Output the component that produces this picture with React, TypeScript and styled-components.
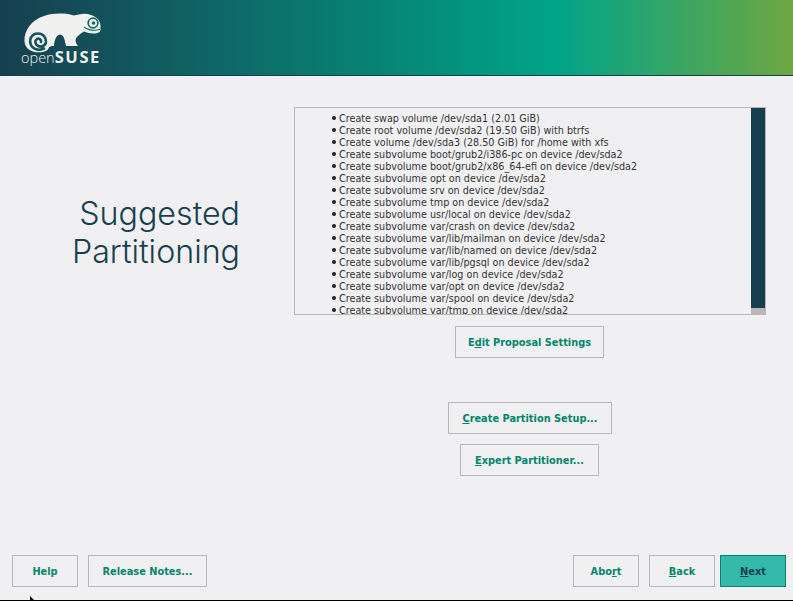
import React from 'react';
import styled, { createGlobalStyle } from 'styled-components';

const GlobalStyle = createGlobalStyle`
  html, body {
    margin: 0;
    padding: 0;
    background: #f0f0f2;
  }
  body {
    font-family: "DejaVu Sans", sans-serif;
    overflow: hidden;
  }
`;

const Page = styled.div`
  position: relative;
  display: flex;
  flex-direction: column;
  width: 793px;
  height: 601px;
  box-sizing: border-box;
  border-bottom: 1px solid #000;
`;

const Header = styled.header`
  display: flex;
  align-items: flex-start;
  flex: none;
  height: 63px;
  padding: 12px 0 0 21px;
  border-bottom: 1px solid #173f4f;
  background: linear-gradient(90deg, #173f4f 0%, #00a489 70%, #6da741 100%);
`;

const LogoBox = styled.div`
  display: flex;
  flex-direction: column;
  width: 84px;
`;

const Wordmark = styled.div`
  display: flex;
  align-items: baseline;
  margin-top: -3px;
  color: #f0f0ee;
  font-family: "Open Sans", sans-serif;
  line-height: 14px;
`;

const WordOpen = styled.span`
  font-size: 14.5px;
  font-weight: 300;
`;

const WordSuse = styled.span`
  font-size: 16.5px;
  font-weight: 700;
  letter-spacing: 1.6px;
`;

const Main = styled.main`
  display: flex;
  flex: 1;
  min-height: 0;
`;

const TitleColumn = styled.div`
  flex: none;
  width: 240px;
  padding-top: 119px;
  box-sizing: border-box;
`;

const Title = styled.h1`
  margin: 0;
  color: #173f4f;
  font-family: "Inter", sans-serif;
  font-size: 32.2px;
  font-weight: 300;
  line-height: 38px;
  text-align: right;
`;

const ContentColumn = styled.div`
  display: flex;
  flex-direction: column;
  align-items: center;
  width: 472px;
  margin-left: 54px;
  padding-top: 31px;
`;

const ListBox = styled.div`
  display: flex;
  width: 100%;
  height: 208px;
  box-sizing: border-box;
  border: 1px solid #b8b8b8;
  margin-bottom: 11px;
`;

const ListScroll = styled.div`
  flex: 1;
  overflow: hidden;
`;

const Items = styled.ul`
  margin: 0;
  padding: 5px 0 0 44px;
  list-style: none;
`;

const Item = styled.li`
  position: relative;
  color: #333;
  font-size: 9.65px;
  line-height: 12px;
  white-space: nowrap;

  &::before {
    content: '';
    position: absolute;
    left: -7px;
    top: 3px;
    width: 4px;
    height: 4px;
    border-radius: 50%;
    background: #222;
  }
`;

const Scrollbar = styled.div`
  display: flex;
  flex-direction: column;
  flex: none;
  width: 14px;
  background: #b8b8b8;
`;

const ScrollThumb = styled.div`
  height: 200px;
  background: #173f4f;
`;

const Button = styled.button<{ $primary?: boolean }>`
  height: 32px;
  padding: 0;
  box-sizing: border-box;
  border: 1px solid ${(p) => (p.$primary ? '#00856a' : '#b8b8b8')};
  border-radius: 0;
  background: ${(p) => (p.$primary ? '#35b9ab' : 'transparent')};
  color: ${(p) => (p.$primary ? '#173f4f' : '#00856a')};
  font-family: "DejaVu Sans", sans-serif;
  font-size: 9.8px;
  font-weight: 700;
`;

const EditButton = styled(Button)`
  width: 149px;
  margin: 0 1px 44px 0;
`;

const CreateButton = styled(Button)`
  width: 164px;
  margin-bottom: 10px;
`;

const ExpertButton = styled(Button)`
  width: 139px;
  margin-right: 1px;
`;

const Mnemonic = styled.span`
  text-decoration: underline;
`;

const Footer = styled.footer`
  display: flex;
  flex: none;
  justify-content: space-between;
  padding: 0 7px 13px 12px;
`;

const FooterGroup = styled.div`
  display: flex;
  gap: 10px;
`;

const FooterButton = styled(Button)<{ $wide?: boolean }>`
  width: ${(p) => (p.$wide ? '119px' : '66px')};
`;

const NextButton = styled(FooterButton)`
  margin-left: -5px;
`;

const Cursor = styled.svg`
  position: absolute;
  left: 30px;
  bottom: 0;
`;

const items = [
  'Create swap volume /dev/sda1 (2.01 GiB)',
  'Create root volume /dev/sda2 (19.50 GiB) with btrfs',
  'Create volume /dev/sda3 (28.50 GiB) for /home with xfs',
  'Create subvolume boot/grub2/i386-pc on device /dev/sda2',
  'Create subvolume boot/grub2/x86_64-efi on device /dev/sda2',
  'Create subvolume opt on device /dev/sda2',
  'Create subvolume srv on device /dev/sda2',
  'Create subvolume tmp on device /dev/sda2',
  'Create subvolume usr/local on device /dev/sda2',
  'Create subvolume var/crash on device /dev/sda2',
  'Create subvolume var/lib/mailman on device /dev/sda2',
  'Create subvolume var/lib/named on device /dev/sda2',
  'Create subvolume var/lib/pgsql on device /dev/sda2',
  'Create subvolume var/log on device /dev/sda2',
  'Create subvolume var/opt on device /dev/sda2',
  'Create subvolume var/spool on device /dev/sda2',
  'Create subvolume var/tmp on device /dev/sda2',
];

// chameleon drawn in page coordinates, offset by the header padding
const Logo = () => (
  <svg width="84" height="41" viewBox="21 12 84 41">
    <path
      fill="#f0f0ee"
      d="M24.5 41 C24 31 31 20 44 16 C53 13 64 13 72 15 C74 16 76 15 79 14.5 C83 13.5 87 13.5 91 15 C97 17 101 21 100.5 27 C100.5 29 100.5 31 99.5 32 C95 34.5 89 33.5 84 31.5 C81 33 79 35 77 37 C75 39 75 42 78 46 C74 46 70 46 66 46 C65 43 65 39 63 36 C61 34 59 34 57 36 C55 39 54 42 54 46 C50 46 50 46 47.5 50 C44 52.5 38 53 33 51.5 C27 49.5 24.7 45.5 24.5 41 Z"
    />
    <path
      fill="none"
      stroke="#15545c"
      strokeWidth="2.6"
      strokeLinecap="round"
      d="M44 48.5 C39 51 32 49.5 30.5 43.5 C29 37.5 33 33.5 38 33.5 C43 33.5 46.5 37.5 46 42 C45.5 46 41 47.5 38 46 C35 44.5 34.5 40.5 37 39 C39 38 41.5 39.5 41 42"
    />
    <circle cx="93" cy="23" r="5.7" fill="#156a68" />
    <circle cx="93" cy="23" r="4" fill="#f0f0ee" />
    <circle cx="93.5" cy="23" r="1.8" fill="#156a68" />
    <path fill="none" stroke="#156a68" strokeWidth="1.1" d="M84 27 C88 30 94 31 100 29.5" />
  </svg>
);

const App: React.FC = () => {
  return (
    <Page>
      <GlobalStyle />
      <Header>
        <LogoBox>
          <Logo />
          <Wordmark>
            <WordOpen>open</WordOpen>
            <WordSuse>SUSE</WordSuse>
          </Wordmark>
        </LogoBox>
      </Header>
      <Main>
        <TitleColumn>
          <Title>
            Suggested
            <br />
            Partitioning
          </Title>
        </TitleColumn>
        <ContentColumn>
          <ListBox>
            <ListScroll>
              <Items>
                {items.map((item) => (
                  <Item key={item}>{item}</Item>
                ))}
              </Items>
            </ListScroll>
            <Scrollbar>
              <ScrollThumb />
            </Scrollbar>
          </ListBox>
          <EditButton>
            E<Mnemonic>d</Mnemonic>it Proposal Settings
          </EditButton>
          <CreateButton>
            <Mnemonic>C</Mnemonic>reate Partition Setup...
          </CreateButton>
          <ExpertButton>
            <Mnemonic>E</Mnemonic>xpert Partitioner...
          </ExpertButton>
        </ContentColumn>
      </Main>
      <Footer>
        <FooterGroup>
          <FooterButton>Help</FooterButton>
          <FooterButton $wide>Release Notes...</FooterButton>
        </FooterGroup>
        <FooterGroup>
          <FooterButton>
            Abo<Mnemonic>r</Mnemonic>t
          </FooterButton>
          <FooterButton>
            <Mnemonic>B</Mnemonic>ack
          </FooterButton>
          <NextButton $primary>
            <Mnemonic>N</Mnemonic>ext
          </NextButton>
        </FooterGroup>
      </Footer>
      <Cursor width="6" height="4" viewBox="0 0 6 4">
        <path d="M0 0 L4 4 L0 4 Z" fill="#111" />
      </Cursor>
    </Page>
  );
};

export default App;
